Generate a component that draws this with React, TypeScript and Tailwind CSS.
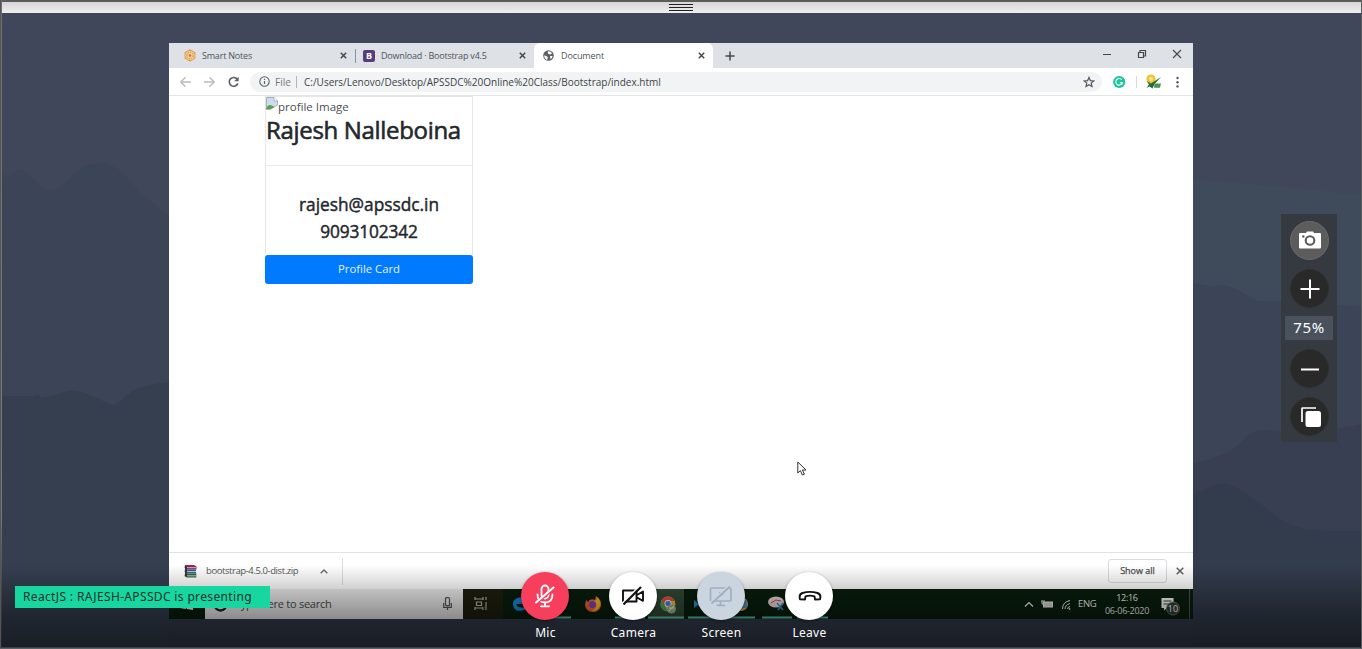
import type { ReactNode } from "react";

const sans = "font-['Open_Sans',sans-serif]";
const noto = "font-['Noto_Sans',sans-serif]";

function Terrain() {
  return (
    <svg className="absolute inset-0" width="1362" height="649" viewBox="0 0 1362 649">
      <rect width="1362" height="649" fill="#40475a" />
      <path d="M1180 178L1240 183L1300 188L1362 195V400H1180Z" fill="#3f4a5b" />
      <path
        d="M0 171Q5 178 9 177Q14 171 19 169Q24 169 30 176Q45 190 51 191Q57 190 66 182Q83 165 90 164Q103 162 110 165Q118 168 127 177L140 193Q152 201 164 213L200 225V649H0Z"
        fill="#3c4457"
      />
      <path d="M1180 281Q1194 283 1204 285Q1213 287 1220 285Q1232 285 1243 293Q1254 300 1260 301H1281Q1320 303 1362 307V649H1180Z" fill="#3c4457" />
      <path d="M1180 466Q1210 461 1228 452Q1238 447 1246 437Q1252 430 1266 430L1281 431Q1310 435 1362 424V649H1180Z" fill="#383f52" />
      <path
        d="M0 396H34L38 394L41 398Q52 396 68 391Q80 389 99 399L111 405Q115 406 119 402Q133 389 142 387Q155 383 169 382V649H0Z"
        fill="#353f50"
      />
      <path d="M1180 502Q1190 495 1212 486Q1224 480 1237 488Q1250 495 1276 516Q1295 531 1330 531H1362V649H1180Z" fill="#333c4d" />
      <rect x="169" y="600" width="1024" height="49" fill="#343d4e" />
    </svg>
  );
}

function TabClose() {
  return (
    <svg width="7" height="7" viewBox="0 0 7 7" className="shrink-0">
      <path d="M.8.8L6.2 6.2M6.2.8L.8 6.2" stroke="#45494e" strokeWidth="1.5" />
    </svg>
  );
}

function TabStrip() {
  return (
    <div className="flex h-[25px] items-center bg-[#dee1e6] text-[9px] tracking-[-0.2px] text-[#50545a]">
      <div className="flex w-[186px] items-center pl-[15px]">
        <svg width="12" height="13" viewBox="0 0 12 13" className="shrink-0">
          <path d="M6 .3L11.4 3.3V9.6L6 12.7L.6 9.6V3.3Z" fill="#e19a58" />
          <circle cx="6" cy="6.5" r="4.6" fill="#f3d08d" />
          <circle cx="6" cy="6.5" r="3.2" fill="none" stroke="#cf7a4a" strokeWidth=".9" strokeDasharray="1.4 1" />
          <circle cx="6" cy="6.5" r="1.2" fill="#cc6a40" />
        </svg>
        <span className="ml-[6px] w-[138px] whitespace-nowrap">Smart Notes</span>
        <TabClose />
      </div>
      <div className="h-[14px] w-px bg-[#8f9399]" />
      <div className="flex w-[178px] items-center pl-[7px]">
        <span className="flex h-[12px] w-[12px] shrink-0 items-center justify-center rounded-[2px] bg-[#563d7c] text-[9px] font-bold text-white">B</span>
        <span className="ml-[6px] w-[138px] whitespace-nowrap">Download · Bootstrap v4.5</span>
        <TabClose />
      </div>
      <div className="flex h-full w-[179px] items-center rounded-t-[6px] bg-white pl-[9px]">
        <svg width="11" height="11" viewBox="0 0 11 11" className="shrink-0">
          <circle cx="5.5" cy="5.5" r="5.3" fill="#5d6166" />
          <path d="M1.2 5.2L3.6 6.3L4.8 7.2L4.2 9.9Q1.2 9 1.2 5.2ZM5 1.2Q7.6.9 9 3L7.6 4.5L5.6 4L4.8 3Z M7 6L9.6 6Q9.3 8.4 7.5 9.2Z" fill="#fff" />
        </svg>
        <span className="ml-[7px] w-[137px] tracking-[-0.1px] whitespace-nowrap">Document</span>
        <TabClose />
      </div>
      <svg width="10" height="10" viewBox="0 0 10 10" className="ml-[12px]">
        <path d="M5 .5V9.5M.5 5H9.5" stroke="#44484d" strokeWidth="1.5" />
      </svg>
      <svg width="82" height="12" viewBox="0 0 82 12" className="mt-[-4px] mr-[10px] ml-auto" fill="none" stroke="#44484d">
        <path d="M2 6.5H10" strokeWidth="1" />
        <path d="M37.5 4.5H42.5V9.5H37.5ZM39 4V2.5H44.5V8H43" strokeWidth="1.2" />
        <path d="M72 2L80 10M80 2L72 10" strokeWidth="1.1" />
      </svg>
    </div>
  );
}

function AddressBar() {
  return (
    <div className="flex h-[28px] items-center border-b border-[#e3e4e6] bg-white">
      <svg width="62" height="12" viewBox="0 0 62 12" className="ml-[10px] shrink-0" fill="none" strokeWidth="1.4">
        <path d="M12 6H2M6.5 1.3L1.8 6L6.5 10.7M25 6H35M30.5 1.3L35.2 6L30.5 10.7" stroke="#b9bbbe" />
        <path d="M58.2 3.2A4.4 4.4 0 1 0 58.8 7.4" stroke="#5a5e63" strokeWidth="1.6" />
        <path d="M59.6 .8V5.2H55.2Z" fill="#5a5e63" />
      </svg>
      <div className="ml-[9px] flex h-[20px] w-[852px] items-center rounded-full bg-[#f1f3f4] pl-[9px] text-[10px]">
        <svg width="11" height="11" viewBox="0 0 11 11" fill="none" stroke="#5f6368" className="shrink-0">
          <circle cx="5.5" cy="5.5" r="4.7" strokeWidth="1.1" />
          <path d="M5.5 5V8M5.5 2.7V3.9" strokeWidth="1.2" />
        </svg>
        <span className="mt-[2px] ml-[5px] w-[20px] whitespace-nowrap text-[#75797e]">File</span>
        <span className="mr-[7px] ml-[1px] h-[12px] w-px bg-[#b5b8bb]" />
        <span className="mt-[2px] whitespace-nowrap text-[#3f4347]">C:/Users/Lenovo/Desktop/APSSDC%20Online%20Class/Bootstrap/index.html</span>
        <svg width="12" height="12" viewBox="0 0 24 24" className="mr-[7px] ml-auto" fill="none" stroke="#55595e" strokeWidth="2.4">
          <path d="M12 2.8L14.8 9.2L21.6 9.8L16.4 14.3L18 21L12 17.4L6 21L7.6 14.3L2.4 9.8L9.2 9.2Z" />
        </svg>
      </div>
      <svg width="74" height="18" viewBox="0 0 74 18" className="ml-[11px] shrink-0">
        <circle cx="6.2" cy="9" r="6.1" fill="#1cc39d" />
        <path d="M8.8 6.8A3.3 3.3 0 1 0 9.3 9.8H6.8M9.2 9.6V11.6" fill="none" stroke="#fff" strokeWidth="1.1" />
        <path d="M23.500 3V15" stroke="#d9dbdd" />
        <circle cx="38" cy="6" r="4.600" fill="#f2c12f" />
        <circle cx="38" cy="6" r="2" fill="#fbe69a" />
        <path d="M33.500 8L38 10.500L48 4L41.500 11L39.500 15.500L36.500 13.500L33.500 15L36 11.500Z" fill="#1e6c3b" />
        <path d="M41.500 10.500H48L47 14.700H41Z" fill="#4b915a" />
        <g fill="#55595e">
          <circle cx="64.500" cy="5" r="1.200" />
          <circle cx="64.500" cy="9.200" r="1.200" />
          <circle cx="64.500" cy="13.400" r="1.200" />
        </g>
      </svg>
    </div>
  );
}

function ProfileCard() {
  return (
    <div className="ml-[96px] h-[188px] w-[208px] text-[#24282c]">
      <div className="flex h-[159px] flex-col border-x border-t border-[#e5e6e7]">
        <div className="flex h-[17px] items-start">
          <svg width="12" height="13" viewBox="0 0 12 13" className="shrink-0">
            <path d="M.5.5H8L11.5 4V8L4 12.5H.5Z" fill="#cddcf0" stroke="#a7b1bd" />
            <path d="M0 12Q2 6.5 6 8.5L8.5 10L5 12Z" fill="#56a645" />
            <path d="M8 .5V4H11.5" fill="#fff" stroke="#a7b1bd" />
          </svg>
          <span className="mt-[1px] text-[11.5px] leading-[17px] whitespace-nowrap text-[#4b4f53]">profile Image</span>
        </div>
        <div className="h-[52px] border-b border-[#e9eaeb] text-[24px] leading-[32px] tracking-[-0.32px] whitespace-nowrap [-webkit-text-stroke:0.6px_#24282c]">
          Rajesh Nalleboina
        </div>
        <div className="pt-[25px] text-center text-[17.3px] leading-[27px] [-webkit-text-stroke:0.45px_#24282c]">
          <div>rajesh@apssdc.in</div>
          <div className="tracking-[-0.15px]">9093102342</div>
        </div>
      </div>
      <div className="flex h-[29px] items-center justify-center rounded-[3px] bg-[#007bff] text-[11.3px] text-[#e4f1ff]">Profile Card</div>
    </div>
  );
}

function DownloadBar() {
  return (
    <div className="flex h-[37px] items-center border-t border-[#e1e2e3] bg-white text-[9.5px] text-[#55585c]">
      <svg width="13" height="13" viewBox="0 0 13 13" className="ml-[15px] shrink-0">
        <path d="M1 0H10L12.5 1.5V4.3H2.5L.5 3Z" fill="#9c2258" />
        <path d="M1 4.3H12V8H2.5L.5 7Z" fill="#2c6a9a" />
        <path d="M1 8.3H12.3V12.5H3L.5 11Z" fill="#2a6e42" />
        <path d="M3 2.7H12M3 6.6H12M3 10.8H12" stroke="#d8cfd6" strokeWidth=".9" />
        <path d="M1 .5L3 1.8V12.5L1 11Z" fill="#41323f" />
      </svg>
      <span className="mt-[1px] ml-[9px] w-[114px] tracking-[-0.42px] whitespace-nowrap">bootstrap-4.5.0-dist.zip</span>
      <svg width="8" height="5" viewBox="0 0 8 5" fill="none" stroke="#686b70" strokeWidth="1.4">
        <path d="M.7 4.3L4 1L7.3 4.3" />
      </svg>
      <span className="ml-[14px] h-[27px] w-px bg-[#dcdddf]" />
      <span className="ml-auto flex h-[24px] w-[59px] items-center justify-center rounded-[3px] border border-[#dadbde] text-[9px] text-[#4b4f53] [-webkit-text-stroke:0.25px_#4b4f53]">
        Show all
      </span>
      <svg width="8" height="8" viewBox="0 0 8 8" className="mr-[9px] ml-[9px]">
        <path d="M.7.7L7.3 7.3M7.3.7L.7 7.3" stroke="#5c6065" strokeWidth="1.5" />
      </svg>
    </div>
  );
}

function Taskbar() {
  return (
    <div className="flex h-[30px] items-center bg-[#091e0d]">
      <div className="flex h-full w-[36px] items-center justify-center">
        <svg width="12" height="12" viewBox="0 0 12 12" fill="#f0f2f0">
          <path d="M0 1.7L5.3 1V5.6H0ZM6 .9L12 0V5.6H6ZM0 6.3H5.3V11L0 10.3ZM6 6.3H12V12L6 11.1Z" />
        </svg>
      </div>
      <div className="flex h-full w-[258px] items-center bg-[#ededed]">
        <svg width="15" height="15" viewBox="0 0 15 15" className="ml-[8px] shrink-0">
          <circle cx="7.5" cy="7.5" r="6" fill="none" stroke="#1d1d1d" strokeWidth="2.4" />
        </svg>
        <span className="mt-[1px] ml-[7px] w-[208px] text-[11px] tracking-[-0.25px] whitespace-nowrap text-[#4a4a4a]">Type here to search</span>
        <svg width="9" height="14" viewBox="0 0 9 14" fill="none" stroke="#555" strokeWidth="1.2">
          <rect x="2.5" y=".7" width="4" height="8" rx="1" />
          <path d="M.7 6V10.3H8.3V6M4.5 10.5V13" />
        </svg>
      </div>
      <svg width="366" height="30" viewBox="463 589 366 30" className="shrink-0">
        <rect x="463" y="589" width="40" height="30" fill="#1e1f0e" />
        <path d="M475 599H483M475 608H483M476.500 602H481.500V605.500H476.500ZM475 597V600M483 597V600M475 607V610M483 607V610M486 597V600M486 602V610" fill="none" stroke="#b5b6ad" strokeWidth="1.200" />
        <path d="M513 602Q516 597 521 597.500Q526 598 526 604H516.500Q517 609 525 607V610Q514 613 513 605Z" fill="#1687d9" />
        <path d="M586 600L588 602Q590 598 595 600L596 596Q602 600 601 606Q599 612 593 612Q586 612 585 605Z" fill="#f0632f" />
        <path d="M590 600Q597 603 597 597Q602 602 599.500 607Q597 611 592 611Q598 607 596 603Z" fill="#fbb92f" />
        <circle cx="592.500" cy="604.500" r="3.400" fill="#7d43b4" />
        <rect x="648" y="589" width="36" height="30" fill="#314a35" />
        <circle cx="668" cy="604" r="7.500" fill="#e4bc36" />
        <path d="M661.500 600Q664 596.500 668 596.500Q673 597 675.300 601H668L664.500 606Z" fill="#e24f43" />
        <path d="M661.500 600L666 608L668 611.500Q660 610 660.500 604Z" fill="#43a75b" />
        <circle cx="668" cy="603.500" r="3.200" fill="#4a82d9" stroke="#fff" />
        <circle cx="671.500" cy="609" r="4.500" fill="#9bb489" />
        <path d="M669 611L674 606M669 608H674" stroke="#f1f2e8" />
        <path d="M694 600L698 603L702 598V610L698 605L694 608Z" fill="#2196d9" />
        <circle cx="741" cy="604" r="7" fill="#dea655" />
        <path d="M740 600H747V608H740Z" fill="#5794bc" />
        <ellipse cx="776" cy="602" rx="8" ry="5.500" fill="#e8d8d7" />
        <path d="M771 603L776 600M776 600L781 601" stroke="#c1484a" strokeWidth="1" fill="none" />
        <path d="M777 603L783 610M783 603L778 610" stroke="#3f8cc9" strokeWidth="1.600" />
        <path d="M552 617.500H571M615 617.500H645M648 617.500H684M688 617.500H755M762 617.500H792M797 617.500H828" stroke="#5cc8a8" strokeWidth="2" />
      </svg>
      <div className="ml-auto flex h-full items-center text-[#f0f2f0]">
        <svg width="47" height="14" viewBox="0 0 47 14" fill="none" stroke="#f0f2f0" className="mr-[1px] shrink-0">
          <path d="M1 9.500L5 5.500L9 9.500" strokeWidth="1.200" />
          <rect x="19.500" y="5" width="9" height="5" fill="#cfd3cf" />
          <path d="M17 4H21M18 4V7H20" />
          <path d="M38.500 12Q38.500 5 46 3.500M41 12Q41 8 46 6.500M43.500 12Q43.500 10 46 9.500" strokeWidth="1" />
          <circle cx="45.500" cy="12" r=".6" />
        </svg>
        <span className="ml-[6px] w-[26px] text-[9.5px] tracking-[-0.4px] whitespace-nowrap">ENG</span>
        <div className="flex w-[46px] flex-col items-center text-[9px] leading-[13px] tracking-[-0.3px] whitespace-nowrap">
          <span>12:16</span>
          <span>06-06-2020</span>
        </div>
        <svg width="22" height="20" viewBox="0 0 22 20" className="mt-[3px] ml-[10px] shrink-0">
          <path d="M1.500 2H13.500V12H7L4 14.500V12H1.500Z" fill="#f6f8f6" />
          <path d="M3.500 5H11.500M3.500 8H9" stroke="#334236" />
          <circle cx="13" cy="12.500" r="6.500" fill="#343d36" stroke="#7a827b" strokeWidth=".8" />
          <text x="13" y="16" fontSize="9" textAnchor="middle" fill="#fff">10</text>
        </svg>
        <span className="mr-[3px] ml-[7px] h-full w-px bg-[#4b574d]" />
      </div>
    </div>
  );
}

function SharedScreen() {
  return (
    <div className={`mt-[30px] ml-[169px] flex h-[576px] w-[1024px] flex-col bg-white ${sans}`}>
      <TabStrip />
      <AddressBar />
      <div className="relative h-[456px]">
        <ProfileCard />
        <svg width="10" height="15" viewBox="0 0 10 15" className="absolute top-[365px] left-[628px]">
          <path d="M.8 1V12L3.400 9.600L5.400 14L7.400 13.200L5.400 9H9Z" fill="#fff" stroke="#2f3338" strokeWidth="1" />
        </svg>
      </div>
      <DownloadBar />
      <Taskbar />
    </div>
  );
}

function RoundTool({ active, children }: { active?: boolean; children: ReactNode }) {
  return (
    <button
      className={`flex h-[39px] w-[39px] items-center justify-center rounded-full border ${active ? "border-[#6a6a6a] bg-[#5c5c5c]" : "border-[#2e2f30] bg-[#292929]"}`}
    >
      {children}
    </button>
  );
}

function ZoomPanel() {
  return (
    <div className="absolute top-[214px] left-[1281px] flex h-[228px] w-[56px] flex-col items-center bg-[#353a41] pt-[7px]">
      <RoundTool active>
        <svg width="24" height="20" viewBox="0 0 24 20" className="mt-[-1px] ml-[2px]">
          <path d="M2 3H8L9 1.500H15L16 3H22Q23 3 23 4V17.500Q23 18.500 22 18.500H2Q1 18.500 1 17.500V4Q1 3 2 3Z" fill="#fff" />
          <circle cx="12" cy="10.500" r="4.300" fill="#fff" stroke="#5c5c5c" strokeWidth="2.100" />
          <circle cx="5.300" cy="6.500" r="1.200" fill="#5c5c5c" />
        </svg>
      </RoundTool>
      <div className="h-[9px]" />
      <RoundTool>
        <svg width="20" height="20" viewBox="0 0 20 20" className="ml-[1px]">
          <path d="M10 .5V19.500M.5 10H19.500" stroke="#fff" strokeWidth="2" />
        </svg>
      </RoundTool>
      <div className={`mt-[8px] mb-[9px] flex h-[24px] w-[48px] items-center justify-center bg-[#49515c] pb-[2px] text-[15px] tracking-[0.6px] text-white ${noto}`}>75%</div>
      <RoundTool>
        <svg width="20" height="20" viewBox="0 0 20 20" className="ml-[2px]">
          <path d="M1 10.500H19" stroke="#fff" strokeWidth="2" />
        </svg>
      </RoundTool>
      <div className="h-[9px]" />
      <RoundTool>
        <svg width="20" height="20" viewBox="0 0 20 20" className="mt-[1px] ml-[3px]">
          <path d="M1 15V1.500Q1 1 1.500 1H15" fill="none" stroke="#fff" strokeWidth="1.700" />
          <rect x="4.500" y="4" width="15.500" height="16" rx="2.500" fill="#fff" />
        </svg>
      </RoundTool>
    </div>
  );
}

function CallButton({ label, tone, children }: { label: string; tone: string; children: ReactNode }) {
  return (
    <div className="flex w-[48px] flex-col items-center">
      <button className={`flex h-[48px] w-[48px] items-center justify-center rounded-full shadow-[0_1px_3px_rgba(0,0,0,0.45)] ${tone}`}>{children}</button>
      <span className="mt-[4px] ml-[1px] text-[12px] leading-[18px] tracking-[0.3px] text-white">{label}</span>
    </div>
  );
}

function CallControls() {
  return (
    <div className={`absolute top-[572px] left-[521px] flex gap-[40px] ${noto}`}>
      <CallButton label="Mic" tone="bg-[#f73e5c]">
        <svg width="20" height="24" viewBox="0 0 20 24" fill="none" stroke="#fff" strokeWidth="1.800" strokeLinecap="round">
          <rect x="6.500" y="1.500" width="7" height="13" rx="3.500" />
          <path d="M2.500 10.500Q2.500 18.500 10 18.500Q17.500 18.500 17.500 10.500M10 18.500V22M6 22.300H14" />
          <path d="M1.500 19.800L19 4.800" stroke="#f73e5c" strokeWidth="1.600" />
          <path d="M1 18.500L18.500 3.500" strokeWidth="2" />
        </svg>
      </CallButton>
      <CallButton label="Camera" tone="bg-white">
        <svg width="24" height="20" viewBox="0 0 24 20" fill="none" stroke="#111" strokeWidth="1.900">
          <path d="M2 4.500H15.500V15.500H2ZM16 9L22 5.500V14.800L16 11.500" strokeLinejoin="round" />
          <path d="M1.500 17L18.500 0" stroke="#fff" strokeWidth="1.500" />
          <path d="M2.500 18.500L20 1" strokeWidth="2.200" />
        </svg>
      </CallButton>
      <CallButton label="Screen" tone="bg-[#cbd5e0]">
        <svg width="24" height="22" viewBox="0 0 24 22" fill="none" stroke="#a2afc2" strokeWidth="1.700">
          <rect x="1.500" y="3" width="20.500" height="13" rx="1" />
          <path d="M11.500 16V20M7.500 20.300H16" />
          <path d="M10 6.500V12.500L14.500 9.500Z" fill="#a2afc2" stroke="none" />
          <path d="M1.500 17.300L19.800 0.500" stroke="#cbd5e0" strokeWidth="1.500" />
          <path d="M2.500 18.500L21 1.500" />
        </svg>
      </CallButton>
      <CallButton label="Leave" tone="bg-white">
        <svg width="24" height="12" viewBox="0 0 24 12" fill="none" stroke="#111" strokeWidth="1.900" strokeLinejoin="round" className="ml-[1px]">
          <path d="M2 9.300Q.5 4.500 4.500 3Q12 .7 19.500 3Q23.500 4.500 22 9.300L17 9.500L16.500 6.300Q12 5 7.500 6.300L7 9.500Z" />
        </svg>
      </CallButton>
    </div>
  );
}

export default function App() {
  return (
    <div className="relative h-[649px] w-[1362px] overflow-hidden bg-[#40475a]">
      <Terrain />
      <div className="relative flex h-full flex-col">
        <div className="flex h-[13px] items-center justify-center border-t-2 border-[#5d5b5c] bg-linear-to-b from-[#d6d6d5] to-[#efefed]">
          <div className="flex w-[24px] flex-col gap-[2px]">
            <div className="h-px bg-[#222]" />
            <div className="h-px bg-[#222]" />
            <div className="h-px bg-[#222]" />
          </div>
        </div>
        <SharedScreen />
      </div>
      <div className="absolute inset-x-0 top-[565px] h-[84px] bg-linear-to-b from-transparent via-black/40 via-[62%] to-black/53" />
      <div className="absolute inset-y-0 left-0 w-[2px] border-l border-[#555] bg-linear-to-b from-[#6c6e70] via-[#77797c] via-[79%] to-[#1d2026]" />
      <div className="absolute inset-y-0 right-0 w-px bg-[#595b5d]" />
      <div className="absolute inset-x-0 bottom-0 h-[2px] border-t border-[#3a4252] bg-[#5c6064]" />
      <div className={`absolute top-[586px] left-[15px] flex h-[22px] w-[255px] items-center bg-[#18d69f] pl-[8px] text-[12px] tracking-[0.35px] whitespace-nowrap text-[#18312d] ${noto}`}>
        ReactJS : RAJESH-APSSDC is presenting
      </div>
      <ZoomPanel />
      <CallControls />
    </div>
  );
}
